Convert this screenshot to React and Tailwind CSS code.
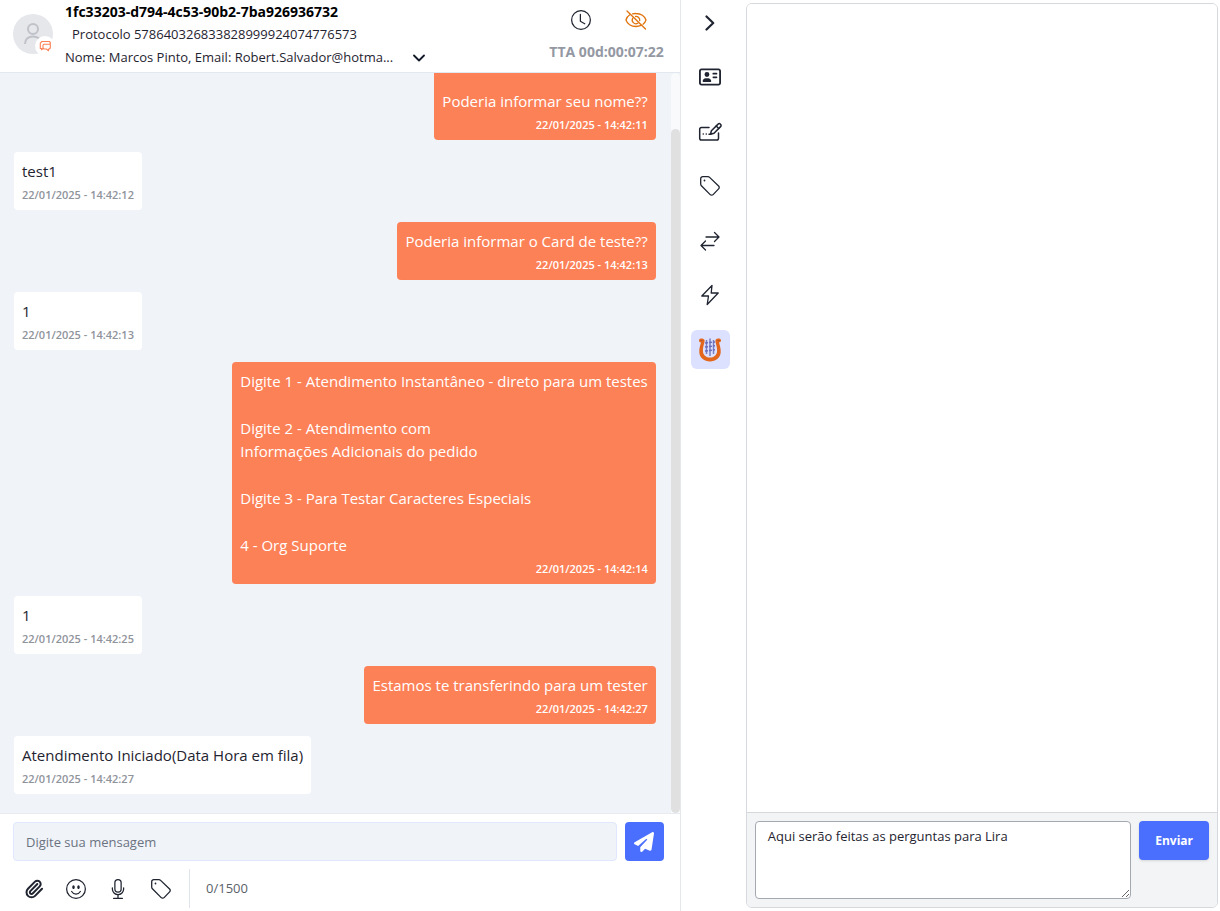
import { useState } from "react";
import clsx from "clsx";
import { Paperclip } from "lucide-react";
import { BsClock, BsEmojiSmile, BsMic } from "react-icons/bs";
import { FaPaperPlane, FaRegAddressCard } from "react-icons/fa6";

const MAX_LENGTH = 1500;

const messages = [
  { id: 1, mine: true, paragraphs: ["", "Poderia informar seu nome??"], time: "22/01/2025 - 14:42:11" },
  { id: 2, mine: false, paragraphs: ["test1"], time: "22/01/2025 - 14:42:12" },
  { id: 3, mine: true, paragraphs: ["Poderia informar o Card de teste??"], time: "22/01/2025 - 14:42:13" },
  { id: 4, mine: false, paragraphs: ["1"], time: "22/01/2025 - 14:42:13" },
  {
    id: 5,
    mine: true,
    paragraphs: [
      "Digite 1 - Atendimento Instantâneo - direto para um testes",
      "Digite 2 - Atendimento com\nInformações Adicionais do pedido",
      "Digite 3 - Para Testar Caracteres Especiais",
      "4 - Org Suporte",
    ],
    time: "22/01/2025 - 14:42:14",
  },
  { id: 6, mine: false, paragraphs: ["1"], time: "22/01/2025 - 14:42:25" },
  { id: 7, mine: true, paragraphs: ["Estamos te transferindo para um tester"], time: "22/01/2025 - 14:42:27" },
  { id: 8, mine: false, paragraphs: ["Atendimento Iniciado(Data Hora em fila)"], time: "22/01/2025 - 14:42:27" },
];

export default function App() {
  const [active, setActive] = useState("lira");

  return (
    <div className="grid h-screen grid-cols-[43fr_66px_30fr] overflow-hidden bg-white font-['Open_Sans','Noto_Sans',sans-serif] text-[#1f2430]">
      <main className="flex min-h-0 min-w-0 flex-col">
        <ChatHeader />
        <MessageList />
        <Composer />
      </main>
      <SideRail active={active} onSelect={setActive} />
      <LiraPanel />
    </div>
  );
}

function ChatHeader() {
  return (
    <header className="flex h-[73px] shrink-0 border-b border-[#e2e8f0] pr-4 pl-[13px]">
      <div className="relative mt-3.5 size-10 shrink-0 rounded-full bg-[#e5e7eb]">
        <svg viewBox="0 0 40 40" className="size-10" fill="none" stroke="#bfc2c8" strokeWidth="2">
          <circle cx="20" cy="15" r="5" />
          <path d="M12 30c0-5 3.500-7.500 8-7.500s8 2.500 8 7.500" />
        </svg>
        <span className="absolute -right-0.5 -bottom-0.5 flex size-5 items-center justify-center rounded-full bg-white">
          <ChatBubblesIcon />
        </span>
      </div>
      <div className="ml-3 min-w-0 flex-1 text-[13px] leading-[23px]">
        <h1 className="truncate text-sm leading-[23px] font-bold text-black">1fc33203-d794-4c53-90b2-7ba926936732</h1>
        <p className="truncate pl-[7px]">Protocolo 578640326833828999924074776573</p>
        <div className="flex items-center gap-5">
          <p className="truncate">Nome: Marcos Pinto, Email: Robert.Salvador@hotma...</p>
          <button aria-label="Expandir" className="shrink-0">
            <svg viewBox="0 0 12 8" className="h-2 w-3" fill="none" stroke="#111827" strokeWidth="1.800" strokeLinecap="round" strokeLinejoin="round">
              <path d="M1 1.500l5 5 5-5" />
            </svg>
          </button>
        </div>
      </div>
      <div className="flex shrink-0 flex-col items-end">
        <div className="mt-2.5 flex h-5 items-center gap-[34px] pr-[17px]">
          <button aria-label="Tempo">
            <BsClock className="size-5" />
          </button>
          <button aria-label="Ocultar" className="text-[#e0730c]">
            <EyeSlashIcon />
          </button>
        </div>
        <p className="mt-2.5 text-sm leading-[23px] font-bold text-[#9498a3]">TTA 00d:00:07:22</p>
      </div>
    </header>
  );
}

function MessageList() {
  return (
    <section className="flex min-h-0 flex-1 bg-[#f0f4f9]">
      <div className="flex min-w-0 flex-1 flex-col justify-end gap-3 overflow-hidden pr-[15px] pb-[19px] pl-3.5">
        {messages.map((m) => (
          <Message key={m.id} {...m} />
        ))}
      </div>
      <div className="flex w-[9px] flex-col rounded-t-full bg-[#f8fafc] pt-14">
        <div className="flex-1 rounded-full bg-[#e0e0e0]" />
      </div>
    </section>
  );
}

function Message({ mine, paragraphs, time }) {
  return (
    <article
      className={clsx(
        "flex max-w-full shrink-0 flex-col rounded px-2 pt-2 pb-1",
        mine ? "self-end bg-[#fd8157] text-white" : "self-start bg-white"
      )}
    >
      <div className="flex flex-col gap-6 text-[15px] leading-[23px]">
        {paragraphs.map((p) => (
          <p key={p} className="whitespace-pre-line">
            {p}
          </p>
        ))}
      </div>
      <time className={clsx("text-[11px] leading-[23px] font-semibold", mine ? "text-right" : "text-[#8f939b]")}>
        {time}
      </time>
    </article>
  );
}

function Composer() {
  const [text, setText] = useState("");

  return (
    <footer className="shrink-0 border-t border-[#e8ebf0] pr-4 pb-[3px] pl-[13px]">
      <div className="mt-2 flex gap-2">
        <input
          aria-label="Mensagem"
          value={text}
          maxLength={MAX_LENGTH}
          onChange={(e) => setText(e.target.value)}
          placeholder="Digite sua mensagem"
          className="h-[39px] min-w-0 flex-1 rounded border border-[#e0e7ff] bg-[#f0f4f9] px-3 text-[13px] outline-none placeholder:text-[#6b7280]"
        />
        <button aria-label="Enviar mensagem" className="flex size-[39px] items-center justify-center rounded bg-[#4a6fff] text-white">
          <FaPaperPlane className="size-5" />
        </button>
      </div>
      <div className="mt-2 flex h-[39px] items-center">
        <div className="flex items-center gap-[22px] pl-[11px]">
          <button aria-label="Anexar">
            <Paperclip className="size-5" strokeWidth={2.4} />
          </button>
          <button aria-label="Emoji">
            <BsEmojiSmile className="size-5" />
          </button>
          <button aria-label="Gravar áudio">
            <BsMic className="h-[22px] w-5" />
          </button>
          <button aria-label="Etiqueta">
            <TagIcon />
          </button>
        </div>
        <span className="ml-[17px] h-full border-l border-[#e0e4ec]" />
        <span className="ml-4 text-[13px] text-[#5a5f69]">
          {text.length}/{MAX_LENGTH}
        </span>
      </div>
    </footer>
  );
}

const railItems = [
  { id: "collapse", label: "Recolher", icon: <ChevronIcon /> },
  { id: "contact", label: "Contato", icon: <FaRegAddressCard className="size-[22px]" /> },
  { id: "notes", label: "Anotações", icon: <CardEditIcon /> },
  { id: "tags", label: "Etiquetas", icon: <TagIcon /> },
  { id: "transfer", label: "Transferir", icon: <TransferIcon /> },
  { id: "quick", label: "Respostas rápidas", icon: <BoltIcon /> },
  { id: "lira", label: "Lira", icon: <LyreIcon /> },
];

function SideRail({ active, onSelect }) {
  return (
    <nav className="border-l border-[#e5e7eb] pt-[3px] pl-2.5">
      <div className="flex h-[366px] flex-col justify-between">
        {railItems.map((item) => (
          <button
            key={item.id}
            aria-label={item.label}
            onClick={() => onSelect(item.id)}
            className={clsx(
              "flex size-[39px] items-center justify-center rounded-md",
              active === item.id && "bg-[#dbe1ff]"
            )}
          >
            {item.icon}
          </button>
        ))}
      </div>
    </nav>
  );
}

function LiraPanel() {
  const [question, setQuestion] = useState("Aqui serão feitas as perguntas para Lira");

  return (
    <aside className="mt-[3px] mr-0.5 mb-[3px] flex min-h-0 flex-col overflow-hidden rounded-md border border-[#d5d8dd]">
      <div className="flex-1 bg-white" />
      <form
        onSubmit={(e) => e.preventDefault()}
        className="flex items-start gap-2 border-t border-[#d5d8dd] bg-[#f3f4f6] p-2"
      >
        <textarea
          aria-label="Pergunta para Lira"
          value={question}
          onChange={(e) => setQuestion(e.target.value)}
          className="h-[78px] min-w-0 flex-1 rounded border border-[#a4a8b0] bg-white px-3 py-1 text-[13px] leading-5 outline-none"
        />
        <button className="h-[39px] rounded bg-[#4a6fff] px-4 text-xs font-bold text-white shadow-sm">Enviar</button>
      </form>
    </aside>
  );
}

function ChatBubblesIcon() {
  return (
    <svg viewBox="0 0 12 12" className="size-3" fill="none" stroke="#fd8157" strokeWidth="1.100" strokeLinejoin="round">
      <path d="M2.500 8.500H1.300V3.200L3 1.500h7.300l1 1V8l-1 1h-.8v1.800L7.500 9H5l-1-1V5.200l1-1h6" />
      <path d="M2.500 8v1.800L4 8.500" />
    </svg>
  );
}

function EyeSlashIcon() {
  return (
    <svg viewBox="0 0 22 20" className="h-5 w-[22px]" fill="none" stroke="currentColor" strokeWidth="1.300" strokeLinecap="round">
      <path d="M4.800 4.800C2.800 6 1.500 8 1 10c1.200 3.700 5.200 6.500 10 6.500 1.800 0 3.500-.4 5-1.100" />
      <path d="M7.500 3.900A12 12 0 0 1 11 3.500c4.800 0 8.800 2.800 10 6.500-.5 1.600-1.600 3.100-3 4.200" />
      <path d="M7.700 8.200a3.700 3.700 0 0 0 5.100 5M10.500 6.500a3.700 3.700 0 0 1 4.200 4.200" />
      <path d="M2 1l18.500 18" />
    </svg>
  );
}

function ChevronIcon() {
  return (
    <svg viewBox="0 0 10 16" className="h-4 w-2.5" fill="none" stroke="currentColor" strokeWidth="2.200" strokeLinecap="round" strokeLinejoin="round">
      <path d="M1.500 1.500L8.200 8l-6.700 6.500" />
    </svg>
  );
}

function CardEditIcon() {
  return (
    <svg viewBox="0 0 24 20" className="h-5 w-6" fill="none" stroke="currentColor" strokeWidth="1.500" strokeLinecap="round" strokeLinejoin="round">
      <path d="M11 5.500H3.500A1.800 1.800 0 0 0 1.700 7.300v8.900A1.800 1.800 0 0 0 3.500 18h15.200a1.800 1.800 0 0 0 1.800-1.800V11" />
      <path d="M12.500 12.200l.9-3.500 6.700-6.600a1.500 1.500 0 0 1 2.200 0l.3.300a1.500 1.500 0 0 1 0 2.200L16 11.200z" />
      <path d="M18.200 4l2.500 2.500" />
      <path d="M5.200 12h.1M8.200 12h.1M11 12.300h1.500" />
    </svg>
  );
}

function TagIcon() {
  return (
    <svg viewBox="0 0 22 22" className="size-[22px]" fill="none" stroke="currentColor" strokeWidth="1.300" strokeLinejoin="round">
      <path d="M1.700 3.700a2 2 0 0 1 2-2h5.200a2.500 2.500 0 0 1 1.700.7l9 8.600a2 2 0 0 1 0 2.900l-5.500 5.700a2 2 0 0 1-2.900 0l-8.800-8.800a2.500 2.500 0 0 1-.7-1.700z" />
      <circle cx="5.500" cy="5.500" r=".9" fill="currentColor" stroke="none" />
    </svg>
  );
}

function TransferIcon() {
  return (
    <svg viewBox="0 0 20 20" className="size-5" fill="none" stroke="currentColor" strokeWidth="1.300" strokeLinecap="round" strokeLinejoin="round">
      <path d="M6 6h13M14.500 1.500L19 6l-4.500 4.500" />
      <path d="M14 14.500H1M5.500 10L1 14.500 5.500 19" />
    </svg>
  );
}

function BoltIcon() {
  return (
    <svg viewBox="0 0 20 22" className="h-[22px] w-5" fill="none" stroke="currentColor" strokeWidth="1.300" strokeLinejoin="round">
      <path d="M12 1.500L1.800 12h6.700l-1.300 8.500L18.200 9h-7z" />
    </svg>
  );
}

function LyreIcon() {
  return (
    <svg viewBox="0 0 26 26" className="size-[26px]" fill="none">
      <path
        d="M2 3.500c0-1.500 1.200-2 2.500-2C7 1.500 8 3 7.500 5 6.800 8 5.500 11 6 15c.5 3.500 3.500 5.500 7 5.500s6.500-2 7-5.500c.5-4-.8-7-1.500-10-.5-2 .5-3.500 3-3.500 1.300 0 2.500.5 2.500 2 0 1.200-.8 2-2 2 .8 3 2 6 1.700 10-.5 5.500-5 9-10.700 9s-10.200-3.500-10.700-9C2 11.500 3.200 8.500 4 5.500c-1.200 0-2-.8-2-2z"
        fill="#e2661c"
      />
      <path d="M3.500 3.500h2M20.500 3.500h2" stroke="#b5532c" strokeWidth="1" />
      <path d="M9.500 3v14M13 1.500V19M16.500 3v14" stroke="#7a7fc4" strokeWidth="1.500" />
      <path d="M8 6l10-1M8 10l10-1.200M8 14l10-1.200" stroke="#6a6fbd" strokeWidth="1.500" strokeDasharray="3 1" />
    </svg>
  );
}
